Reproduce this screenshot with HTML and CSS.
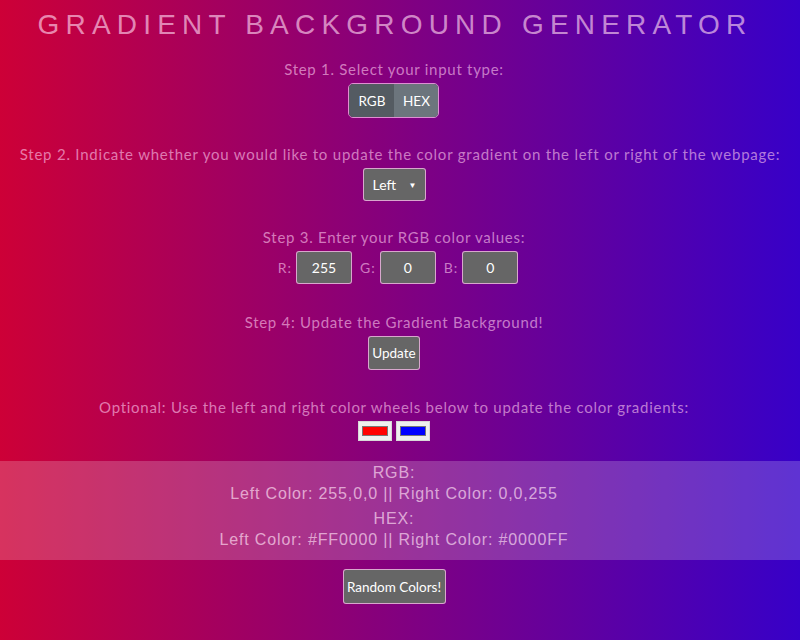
FILE: index.html
```html
<!DOCTYPE html>
<html lang="en">
<head>
<meta charset="utf-8">
<title>Gradient Background Generator</title>
<link rel="stylesheet" href="styles.css">
</head>
<body>
<h1 class="title">GRADIENT BACKGROUND GENERATOR</h1>

<section class="step">
  <p class="label">Step 1. Select your input type:</p>
  <div class="toggle">
    <button class="toggle-btn active">RGB</button>
    <button class="toggle-btn">HEX</button>
  </div>
</section>

<section class="step step-2">
  <p class="label">Step 2. Indicate whether you would like to update the color gradient on the left or right of the webpage:</p>
  <div class="select"><span>Left</span><span class="arrow">&#9660;</span></div>
</section>

<section class="step">
  <p class="label">Step 3. Enter your RGB color values:</p>
  <div class="inputs">
    <label class="field"><span class="field-name">R:</span><span class="box">255</span></label>
    <label class="field"><span class="field-name">G:</span><span class="box">0</span></label>
    <label class="field"><span class="field-name">B:</span><span class="box">0</span></label>
  </div>
</section>

<section class="step step-4">
  <p class="label">Step 4: Update the Gradient Background!</p>
  <button class="btn update">Update</button>
</section>

<section class="step step-5">
  <p class="label">Optional: Use the left and right color wheels below to update the color gradients:</p>
  <div class="swatches">
    <span class="swatch"><span class="swatch-fill red"></span></span>
    <span class="swatch"><span class="swatch-fill blue"></span></span>
  </div>
</section>

<div class="band">
  <div class="band-group">
    <p class="band-line">RGB:</p>
    <p class="band-line">Left Color: 255,0,0 || Right Color: 0,0,255</p>
  </div>
  <div class="band-group">
    <p class="band-line">HEX:</p>
    <p class="band-line">Left Color: #FF0000 || Right Color: #0000FF</p>
  </div>
</div>

<div class="random">
  <button class="btn random-btn">Random Colors!</button>
</div>
</body>
</html>
```

FILE: styles.css
```css
html, body {
  margin: 0;
  padding: 0;
}
body {
  box-sizing: border-box;
  width: 800px;
  height: 640px;
  overflow: hidden;
  padding-right: 12px;
  background: linear-gradient(to right, rgb(205, 0, 55), rgb(55, 0, 200));
  text-align: center;
  font-family: "Lato", "Open Sans", sans-serif;
  display: flex;
  flex-direction: column;
  align-items: center;
}
.title {
  margin: 8px 0 0 2px;
  white-space: nowrap;
  font-family: "Liberation Sans", Arial, sans-serif;
  font-weight: normal;
  font-size: 28px;
  line-height: 34px;
  letter-spacing: 6.2px;
  color: rgba(255, 215, 240, 0.64);
}
.step {
  display: flex;
  flex-direction: column;
  align-items: center;
  gap: 4px;
}
.step:first-of-type {
  margin-top: 17px;
}
.step + .step {
  margin-top: 26px;
}
.step.step-4 {
  margin-top: 28px;
}
.step.step-5 {
  margin-top: 27px;
}
.label {
  margin: 0;
  white-space: nowrap;
  font-size: 15px;
  line-height: 20px;
  letter-spacing: 0.72px;
  color: rgba(255, 205, 240, 0.6);
}
.step-2 .label {
  margin-left: 12px;
  letter-spacing: 0.78px;
}
.toggle {
  display: flex;
  border: 1.5px solid rgba(255, 190, 240, 0.75);
  border-radius: 5px;
  overflow: hidden;
}
.toggle-btn {
  border: 0;
  margin: 0;
  height: 33px;
  width: 44px;
  padding: 0;
  font-family: "Lato", sans-serif;
  font-size: 13.5px;
  color: #fff;
  background: #6c757d;
}
.toggle-btn.active {
  width: 45px;
  background: #545b62;
}
.select {
  box-sizing: border-box;
  width: 63px;
  height: 33px;
  display: flex;
  align-items: center;
  justify-content: space-between;
  padding: 0 8px 0 9px;
  background: #666;
  border: 1.5px solid rgba(255, 190, 240, 0.75);
  border-radius: 3px;
  color: #fff;
  font-size: 14px;
}
.arrow {
  font-size: 8px;
}
.inputs {
  display: flex;
  gap: 8px;
  margin-left: 8px;
}
.field {
  display: flex;
  align-items: center;
  gap: 4px;
}
.field-name {
  font-size: 14px;
  letter-spacing: 1px;
  color: rgba(255, 205, 240, 0.6);
}
.box {
  box-sizing: border-box;
  width: 56px;
  height: 33px;
  display: flex;
  align-items: center;
  justify-content: center;
  background: #666;
  border: 1.5px solid rgba(255, 190, 240, 0.75);
  border-radius: 3px;
  color: #fff;
  font-size: 14px;
}
.btn {
  box-sizing: border-box;
  height: 34px;
  padding: 0;
  margin: 0;
  background: #666;
  border: 1.5px solid rgba(255, 190, 240, 0.75);
  border-radius: 3px;
  color: #fff;
  font-family: "Lato", sans-serif;
  font-size: 13.5px;
}
.update {
  width: 52px;
}
.swatches {
  display: flex;
  gap: 4px;
}
.swatch {
  box-sizing: border-box;
  width: 34px;
  height: 20px;
  display: flex;
  align-items: center;
  justify-content: center;
  background: #efefef;
  border: 1px solid #d8d8d8;
}
.swatch-fill {
  width: 26px;
  height: 10px;
  border: 1px solid #777;
  box-sizing: border-box;
}
.red { background: #ff0000; }
.blue { background: #0000ff; }
.band {
  align-self: stretch;
  margin-top: 20px;
  margin-right: -12px;
  padding: 1px 12px 0 0;
  height: 99px;
  box-sizing: border-box;
  background: rgba(255, 255, 255, 0.2);
  display: flex;
  flex-direction: column;
  align-items: center;
  gap: 4px;
}
.band-line {
  margin: 0;
  font-family: "Liberation Sans", Arial, sans-serif;
  font-size: 16px;
  line-height: 21px;
  letter-spacing: 0.85px;
  color: rgba(255, 225, 245, 0.68);
}
.random {
  margin-top: 9px;
}
.random-btn {
  height: 35px;
  width: 103px;
}
```
